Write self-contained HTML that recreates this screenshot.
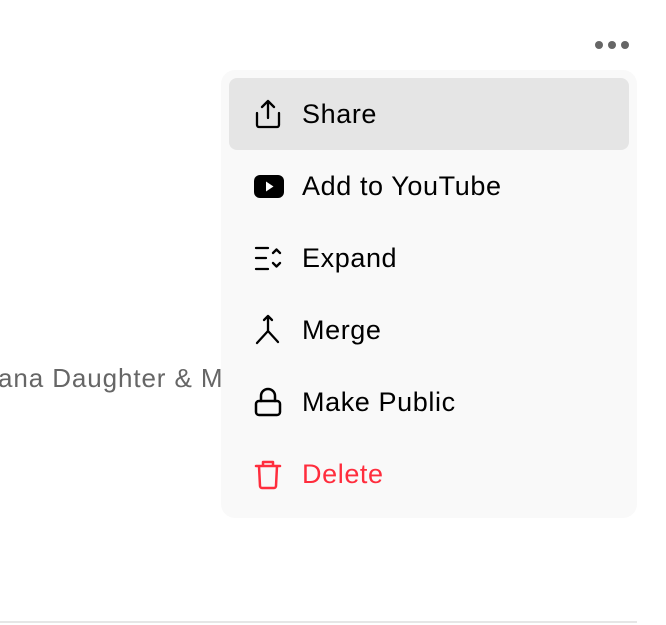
<!DOCTYPE html>
<html><head><style>
body{margin:0;width:666px;height:625px;background:#fff;position:relative;overflow:hidden;font-family:"Liberation Sans",Arial,sans-serif}
.bg{position:absolute;left:-2px;top:363px;font-size:26px;letter-spacing:0.9px;color:#666;white-space:nowrap}
.line{position:absolute;left:0;top:621px;width:637px;height:2px;background:#e6e6e6}
.dots{position:absolute;top:41px;left:595px}
.dots i{position:absolute;width:8px;height:8px;border-radius:50%;background:#666;top:0}
.menu{position:absolute;left:221px;top:70px;width:416px;height:448px;background:#f9f9f9;border-radius:14px}
.hl{position:absolute;left:8px;top:8px;width:400px;height:72px;background:#e5e5e5;border-radius:8px}
.row{position:absolute;left:0;height:72px;width:416px}
.row span{position:absolute;left:81px;top:0;line-height:72px;font-size:27px;letter-spacing:0.6px;color:#000}
.row svg{position:absolute;left:32px;top:20px}
</style></head><body>
<div class="bg">ana Daughter &amp; Mia</div>
<div class="line"></div>
<div class="dots"><i style="left:0"></i><i style="left:13px"></i><i style="left:26px"></i></div>
<div class="menu">
<div class="hl"></div>
<div class="row" style="top:8px"><svg width="30" height="32" viewBox="0 0 30 32" fill="none" stroke="#000" stroke-width="2.3" stroke-linecap="round" stroke-linejoin="round"><path d="M15 3V20M9 9l6-6 6 6M4 15v12a2 2 0 0 0 2 2h18a2 2 0 0 0 2-2V15"/></svg><span>Share</span></div>
<div class="row" style="top:80px"><svg width="32" height="32" viewBox="0 0 32 32"><rect x="1" y="5" width="30" height="23" rx="6" fill="#000"/><path d="M13 11.5v10l7.5-5z" fill="#fff"/></svg><span>Add to YouTube</span></div>
<div class="row" style="top:152px"><svg width="30" height="32" viewBox="0 0 30 32" fill="none" stroke="#000" stroke-width="2.3" stroke-linecap="round" stroke-linejoin="round"><path d="M3 6h12M3 16h10M3 27h12M20 11l3.5-3.5L27 11M20 21l3.5 3.5L27 21"/></svg><span>Expand</span></div>
<div class="row" style="top:224px"><svg width="30" height="32" viewBox="0 0 30 32" fill="none" stroke="#000" stroke-width="2.3" stroke-linecap="round" stroke-linejoin="round"><path d="M11 6l4-4 4 4M15 2v15L4 29M15 17l10 11"/></svg><span>Merge</span></div>
<div class="row" style="top:296px"><svg width="30" height="32" viewBox="0 0 30 32" fill="none" stroke="#000" stroke-width="2.5" stroke-linecap="round" stroke-linejoin="round"><path d="M8 15V10a7 7 0 0 1 14 0v5"/><rect x="3" y="15" width="24" height="14" rx="3"/></svg><span>Make Public</span></div>
<div class="row" style="top:368px"><svg width="30" height="32" viewBox="0 0 30 32" fill="none" stroke="#ff2d3d" stroke-width="2.5" stroke-linecap="round" stroke-linejoin="round"><path d="M3 8h24M10 8V4h10v4M6 8l1 20a2 2 0 0 0 2 2h12a2 2 0 0 0 2-2l1-20"/></svg><span style="color:#ff2d3d">Delete</span></div>
</div>
</body></html>
